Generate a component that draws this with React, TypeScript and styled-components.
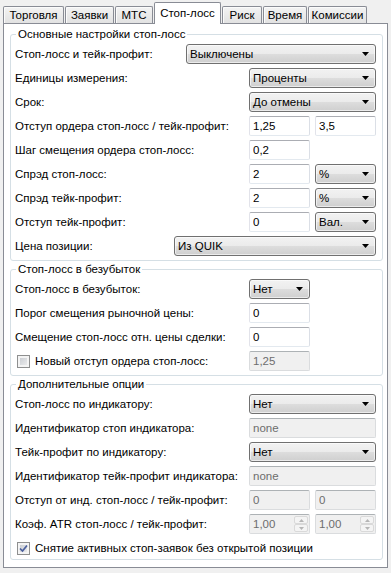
import React from 'react';
import styled, { createGlobalStyle } from 'styled-components';

const GlobalStyle = createGlobalStyle`
    html, body {
        margin: 0;
        padding: 0;
        background: #f0f0f0;
    }
    body {
        font-family: "Liberation Sans", Arial, sans-serif;
        font-size: 11.5px;
        color: #000;
    }
    * {
        box-sizing: border-box;
    }
`;

const Window = styled.div`
    width: 391px;
    height: 573px;
    padding: 2px 3px 5px 3px;
    display: flex;
    flex-direction: column;
    background: #f0f0f0;
`;

const TabStrip = styled.div`
    display: flex;
    align-items: flex-end;
    gap: 1px;
    height: 22px;
    position: relative;
    z-index: 1;
`;

const Tab = styled.div<{ $active?: boolean; $w: number }>`
    width: ${p => p.$w}px;
    height: ${p => (p.$active ? 22 : 17)}px;
    margin-bottom: ${p => (p.$active ? 0 : 1)}px;
    border: 1px solid #898c95;
    border-bottom: none;
    border-radius: 2px 2px 0 0;
    background: ${p => (p.$active ? '#fff' : 'linear-gradient(to bottom, #f3f3f3, #e2e2e2)')};
    box-shadow: ${p => (p.$active ? 'none' : 'inset 1px 1px 0 #fbfbfb')};
    display: flex;
    align-items: center;
    justify-content: center;
    padding-bottom: ${p => (p.$active ? 1 : 0)}px;
    white-space: nowrap;
`;

const Panel = styled.div`
    flex: 1;
    margin-top: -1px;
    border: 1px solid #898c95;
    background: #fff;
    padding: 3px 4px 0 6px;
    display: flex;
    flex-direction: column;
    gap: 1px;
`;

const Group = styled.fieldset<{ $pb?: number }>`
    margin: 0;
    min-width: 0;
    border: 1px solid #d5dfe5;
    border-radius: 3px;
    padding: 3px 6px ${p => p.$pb ?? 4}px 4px;
    display: flex;
    flex-direction: column;
    gap: 4px;
`;

const Legend = styled.legend`
    padding: 0 2px;
    margin-left: 1px;
    line-height: 14px;
`;

const Row = styled.div`
    display: flex;
    align-items: center;
    height: 20px;
`;

const Label = styled.span`
    flex: 1;
    display: flex;
    align-items: center;
    white-space: nowrap;
`;

const Controls = styled.div<{ $w?: number }>`
    flex: none;
    width: ${p => p.$w ?? 127}px;
    display: flex;
    gap: 5px;
`;

const ComboBox = styled.div<{ $w?: number }>`
    flex: ${p => (p.$w ? `0 0 ${p.$w}px` : '1')};
    height: 20px;
    border: 1px solid #707070;
    border-radius: 3px;
    background: linear-gradient(to bottom, #f2f2f2 0%, #ebebeb 50%, #dddddd 50%, #cfcfcf 100%);
    box-shadow: inset 0 0 0 1px rgba(255, 255, 255, 0.6);
    display: flex;
    align-items: center;
    justify-content: space-between;
    padding: 0 6px 0 3px;
    white-space: nowrap;
`;

const TextBox = styled.input<{ $w?: number }>`
    flex: ${p => (p.$w ? `0 0 ${p.$w}px` : '1')};
    width: 0;
    min-width: 0;
    height: 20px;
    margin: 0;
    border: 1px solid;
    border-color: #abadb3 #dbdfe6 #e3e9ef #e2e3ea;
    border-radius: 2px;
    padding: 0 3px;
    font: inherit;
    color: #000;
    background: #fff;
    outline: none;

    &:disabled {
        color: #6d6d6d;
        background: #f0f0f0;
        border-color: #adb2b5 #dadcde #dadcde #dadcde;
        opacity: 1;
    }
`;

const SpinBox = styled.div`
    flex: 0 0 61px;
    height: 20px;
    display: flex;
    align-items: stretch;
    border: 1px solid;
    border-color: #adb2b5 #dadcde #dadcde #dadcde;
    border-radius: 2px;
    background: #f0f0f0;
    color: #6d6d6d;
    padding: 1px 1px 1px 3px;
`;

const SpinText = styled.span`
    flex: 1;
    display: flex;
    align-items: center;
`;

const SpinButtons = styled.div`
    width: 14px;
    display: flex;
    flex-direction: column;
`;

const SpinButton = styled.div`
    flex: 1;
    border: 1px solid #d9d9d9;
    border-radius: 2px;
    background: #f4f4f4;
    display: flex;
    align-items: center;
    justify-content: center;
`;

const CheckBox = styled.span`
    flex: none;
    width: 13px;
    height: 13px;
    margin: 0 5px 0 2px;
    border: 1px solid #8e8f8f;
    background: linear-gradient(135deg, #c3c7cd, #f2f2f2);
    box-shadow: inset 0 0 0 2px #f4f4f4;
    display: flex;
    align-items: center;
    justify-content: center;
`;

const Arrow = () => (
    <svg width="7" height="4" viewBox="0 0 7 4">
        <polygon points="0,0 7,0 3.5,4" fill="#000" />
    </svg>
);

const Combo = ({ value, w }: { value: string; w?: number }) => (
    <ComboBox $w={w}>
        <span>{value}</span>
        <Arrow />
    </ComboBox>
);

const Spin = ({ value }: { value: string }) => (
    <SpinBox>
        <SpinText>{value}</SpinText>
        <SpinButtons>
            <SpinButton>
                <svg width="5" height="3" viewBox="0 0 5 3">
                    <polygon points="0,3 5,3 2.5,0" fill="#b5b5b5" />
                </svg>
            </SpinButton>
            <SpinButton>
                <svg width="5" height="3" viewBox="0 0 5 3">
                    <polygon points="0,0 5,0 2.5,3" fill="#b5b5b5" />
                </svg>
            </SpinButton>
        </SpinButtons>
    </SpinBox>
);

const Check = ({ checked }: { checked?: boolean }) => (
    <CheckBox>
        {checked && (
            <svg width="9" height="9" viewBox="0 0 9 9">
                <path d="M1 4.5 L3.5 7 L8 1.5" fill="none" stroke="#4a5f9d" strokeWidth="1.7" />
            </svg>
        )}
    </CheckBox>
);

const tabs = [
    { label: 'Торговля', w: 61 },
    { label: 'Заявки', w: 49 },
    { label: 'МТС', w: 38 },
    { label: 'Стоп-лосс', w: 67, active: true },
    { label: 'Риск', w: 40 },
    { label: 'Время', w: 44 },
    { label: 'Комиссии', w: 59 },
];

const App = () => (
    <>
        <GlobalStyle />
        <Window>
            <TabStrip>
                {tabs.map(t => (
                    <Tab key={t.label} $w={t.w} $active={t.active}>{t.label}</Tab>
                ))}
            </TabStrip>
            <Panel>
                <Group>
                    <Legend>Основные настройки стоп-лосс</Legend>
                    <Row>
                        <Label>Стоп-лосс и тейк-профит:</Label>
                        <Controls $w={190}><Combo value="Выключены" /></Controls>
                    </Row>
                    <Row>
                        <Label>Единицы измерения:</Label>
                        <Controls><Combo value="Проценты" /></Controls>
                    </Row>
                    <Row>
                        <Label>Срок:</Label>
                        <Controls><Combo value="До отмены" /></Controls>
                    </Row>
                    <Row>
                        <Label>Отступ ордера стоп-лосс / тейк-профит:</Label>
                        <Controls>
                            <TextBox $w={61} readOnly value="1,25" />
                            <TextBox $w={61} readOnly value="3,5" />
                        </Controls>
                    </Row>
                    <Row>
                        <Label>Шаг смещения ордера стоп-лосс:</Label>
                        <Controls><TextBox $w={61} readOnly value="0,2" /></Controls>
                    </Row>
                    <Row>
                        <Label>Спрэд стоп-лосс:</Label>
                        <Controls>
                            <TextBox $w={61} readOnly value="2" />
                            <Combo value="%" w={61} />
                        </Controls>
                    </Row>
                    <Row>
                        <Label>Спрэд тейк-профит:</Label>
                        <Controls>
                            <TextBox $w={61} readOnly value="2" />
                            <Combo value="%" w={61} />
                        </Controls>
                    </Row>
                    <Row>
                        <Label>Отступ тейк-профит:</Label>
                        <Controls>
                            <TextBox $w={61} readOnly value="0" />
                            <Combo value="Вал." w={61} />
                        </Controls>
                    </Row>
                    <Row>
                        <Label>Цена позиции:</Label>
                        <Controls $w={202}><Combo value="Из QUIK" /></Controls>
                    </Row>
                </Group>

                <Group>
                    <Legend>Стоп-лосс в безубыток</Legend>
                    <Row>
                        <Label>Стоп-лосс в безубыток:</Label>
                        <Controls><Combo value="Нет" w={61} /></Controls>
                    </Row>
                    <Row>
                        <Label>Порог смещения рыночной цены:</Label>
                        <Controls><TextBox $w={61} readOnly value="0" /></Controls>
                    </Row>
                    <Row>
                        <Label>Смещение стоп-лосс отн. цены сделки:</Label>
                        <Controls><TextBox $w={61} readOnly value="0" /></Controls>
                    </Row>
                    <Row>
                        <Label><Check />Новый отступ ордера стоп-лосс:</Label>
                        <Controls><TextBox $w={61} disabled value="1,25" /></Controls>
                    </Row>
                </Group>

                <Group $pb={1}>
                    <Legend>Дополнительные опции</Legend>
                    <Row>
                        <Label>Стоп-лосс по индикатору:</Label>
                        <Controls><Combo value="Нет" /></Controls>
                    </Row>
                    <Row>
                        <Label>Идентификатор стоп индикатора:</Label>
                        <Controls><TextBox disabled value="none" /></Controls>
                    </Row>
                    <Row>
                        <Label>Тейк-профит по индикатору:</Label>
                        <Controls><Combo value="Нет" /></Controls>
                    </Row>
                    <Row>
                        <Label>Идентификатор тейк-профит индикатора:</Label>
                        <Controls><TextBox disabled value="none" /></Controls>
                    </Row>
                    <Row>
                        <Label>Отступ от инд. стоп-лосс / тейк-профит:</Label>
                        <Controls>
                            <TextBox $w={61} disabled value="0" />
                            <TextBox $w={61} disabled value="0" />
                        </Controls>
                    </Row>
                    <Row>
                        <Label>Коэф. ATR стоп-лосс / тейк-профит:</Label>
                        <Controls>
                            <Spin value="1,00" />
                            <Spin value="1,00" />
                        </Controls>
                    </Row>
                    <Row>
                        <Label><Check checked />Снятие активных стоп-заявок без открытой позиции</Label>
                    </Row>
                </Group>
            </Panel>
        </Window>
    </>
);

export default App;
